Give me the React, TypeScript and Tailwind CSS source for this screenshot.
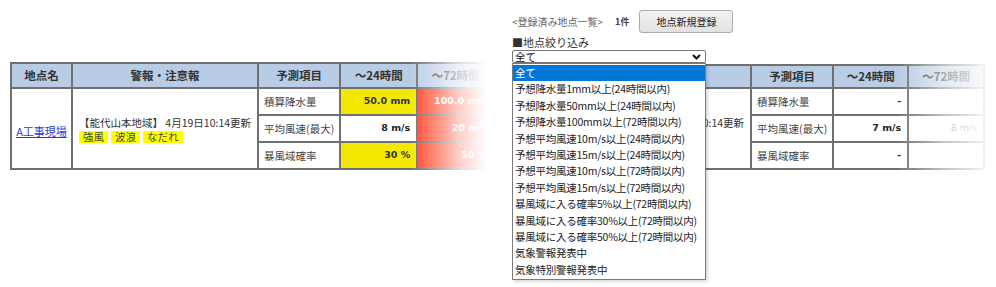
import React from "react";

type Tone = "yellow" | "red" | "white";

type ForecastRow = {
  label: string;
  v24: string;
  v72: string;
  c24: Tone;
  c72: Tone;
};

const leftRows: ForecastRow[] = [
  { label: "積算降水量", v24: "50.0 mm", v72: "100.0 mm", c24: "yellow", c72: "red" },
  { label: "平均風速(最大)", v24: "8 m/s", v72: "20 m/s", c24: "white", c72: "red" },
  { label: "暴風域確率", v24: "30 %", v72: "50 %", c24: "yellow", c72: "red" }
];

const rightRows: ForecastRow[] = [
  { label: "積算降水量", v24: "-", v72: "-", c24: "white", c72: "white" },
  { label: "平均風速(最大)", v24: "7 m/s", v72: "8 m/s", c24: "white", c72: "white" },
  { label: "暴風域確率", v24: "-", v72: "-", c24: "white", c72: "white" }
];

const filterOptions = [
  "全て",
  "予想降水量1mm以上(24時間以内)",
  "予想降水量50mm以上(24時間以内)",
  "予想降水量100mm以上(72時間以内)",
  "予想平均風速10m/s以上(24時間以内)",
  "予想平均風速15m/s以上(24時間以内)",
  "予想平均風速10m/s以上(72時間以内)",
  "予想平均風速15m/s以上(72時間以内)",
  "暴風域に入る確率5%以上(72時間以内)",
  "暴風域に入る確率30%以上(72時間以内)",
  "暴風域に入る確率50%以上(72時間以内)",
  "気象警報発表中",
  "気象特別警報発表中"
];

const toneClass: Record<Tone, string> = {
  yellow: "bg-[#f3e900] text-[#333]",
  red: "bg-[#ff4526] text-white",
  white: "bg-white text-[#222]"
};

const cellBorder = "border-2 border-[#707070]";
const headCell = `${cellBorder} bg-[#b9cce5] text-[11.5px] font-bold text-[#333]`;
const valueFont = "font-['DejaVu_Sans',sans-serif] text-[9.5px] font-bold";

type TableProps = {
  rows: ForecastRow[];
  cols: string[];
  headH: string;
  hiddenStart?: boolean;
  muted72?: boolean;
};

function ForecastTable({ rows, cols, headH, hiddenStart, muted72 }: TableProps) {
  return (
    <table className="table-fixed border-collapse">
      <colgroup>
        {cols.map((c, i) => (
          <col key={i} className={c} />
        ))}
      </colgroup>
      <thead>
        <tr className={headH}>
          <th className={headCell}>地点名</th>
          <th className={headCell}>警報・注意報</th>
          <th className={headCell}>予測項目</th>
          <th className={headCell}>～24時間</th>
          <th className={`${headCell} text-[#8a8f99]`}>～72時間</th>
        </tr>
      </thead>
      <tbody>
        {rows.map((row, i) => (
          <tr key={row.label} className="h-[27px]">
            {i === 0 && (
              <>
                <td rowSpan={3} className={`${cellBorder} text-center`}>
                  {!hiddenStart && <a className="text-[11px] text-[#2a3bd0] underline">A工事現場</a>}
                </td>
                <td
                  rowSpan={3}
                  className={`${cellBorder} overflow-hidden whitespace-nowrap px-[6px] text-[10.5px] leading-[16px] text-[#333]`}
                >
                  <div className="flex justify-end">
                    <span className={hiddenStart ? "" : "mr-auto"}>【能代山本地域】 4月19日10:14更新</span>
                  </div>
                  <div className="flex gap-[3px]">
                    {!hiddenStart &&
                      ["強風", "波浪", "なだれ"].map((w) => (
                        <span key={w} className="bg-[#ffff00] px-[4px] leading-[12px] text-[#444]">
                          {w}
                        </span>
                      ))}
                    {hiddenStart && <span className="h-[12px]" />}
                  </div>
                </td>
              </>
            )}
            <td className={`${cellBorder} whitespace-nowrap px-[5px] text-[10.5px] leading-[14px] text-[#444]`}>
              {row.label}
            </td>
            <td className={`${cellBorder} ${toneClass[row.c24]} ${valueFont} pr-[6px] text-right`}>
              {row.v24}
            </td>
            <td
              className={`${cellBorder} ${toneClass[row.c72]} ${valueFont} pr-[6px] text-right ${
                muted72 ? "font-normal text-[#777]" : ""
              }`}
            >
              {row.v72}
            </td>
          </tr>
        ))}
      </tbody>
    </table>
  );
}

export default function App() {
  return (
    <div className="flex h-[287px] w-[996px] overflow-hidden bg-white font-['Noto_Sans_CJK_JP',sans-serif]">
      <section className="relative w-[500px] shrink-0 pl-[10px] pt-[62px]">
        <ForecastTable
          rows={leftRows}
          cols={["w-[61px]", "w-[182px]", "w-[80px]", "w-[77px]", "w-[77px]"]}
          headH="h-[25px]"
        />
        <div className="absolute left-[410px] top-[55px] h-[120px] w-[90px] bg-gradient-to-r from-white/0 via-white/75 via-55% to-white to-85%" />
      </section>

      <section className="relative flex-1 pl-[12px] pt-[10px]">
        <div className="flex h-[23px] items-center">
          <span className="text-[10px] text-[#666]">&lt;登録済み地点一覧&gt;</span>
          <span className="ml-[12px] text-[9px] font-bold text-[#444]">1件</span>
          <button
            type="button"
            className="ml-[10px] h-[23px] w-[94px] rounded-[3px] border border-[#adadad] bg-gradient-to-b from-[#f2f2f2] to-[#e2e2e2] text-[10px] text-[#222]"
          >
            地点新規登録
          </button>
        </div>
        <p className="h-[17px] pt-[2px] text-[11px] leading-[15px] text-[#333]">■地点絞り込み</p>
        <div className="flex h-[13px] w-[194px] items-center justify-between rounded-[2px] border border-[#767676] pl-[2px] pr-[4px]">
          <span className="text-[10.5px] leading-[12px] text-[#111]">全て</span>
          <svg width="9" height="6" viewBox="0 0 9 6">
            <path d="M1 1l3.5 3.5L8 1" fill="none" stroke="#111" strokeWidth="2" />
          </svg>
        </div>

        <div className="mt-[1px]">
          <ForecastTable
            rows={rightRows}
            cols={["w-[52px]", "w-[182px]", "w-[76px]", "w-[75px]", "w-[76px]"]}
            headH="h-[23px]"
            hiddenStart
            muted72
          />
        </div>

        <ul className="absolute left-[12px] top-[63px] w-[194px] border border-[#7a7a7a] bg-white py-[1px] shadow-[2px_2px_3px_rgba(0,0,0,0.15)]">
          {filterOptions.map((opt, i) => (
            <li
              key={opt}
              className={`h-[16.4px] whitespace-nowrap px-[2px] text-[10.5px] leading-[16.4px] tracking-[-0.25px] ${
                i === 0 ? "bg-[#0078d7] text-white" : "text-[#222]"
              }`}
            >
              {opt}
            </li>
          ))}
        </ul>

        <div className="absolute left-[397px] top-[55px] h-[120px] w-[99px] bg-gradient-to-r from-white/0 via-white/60 to-white" />
      </section>
    </div>
  );
}
